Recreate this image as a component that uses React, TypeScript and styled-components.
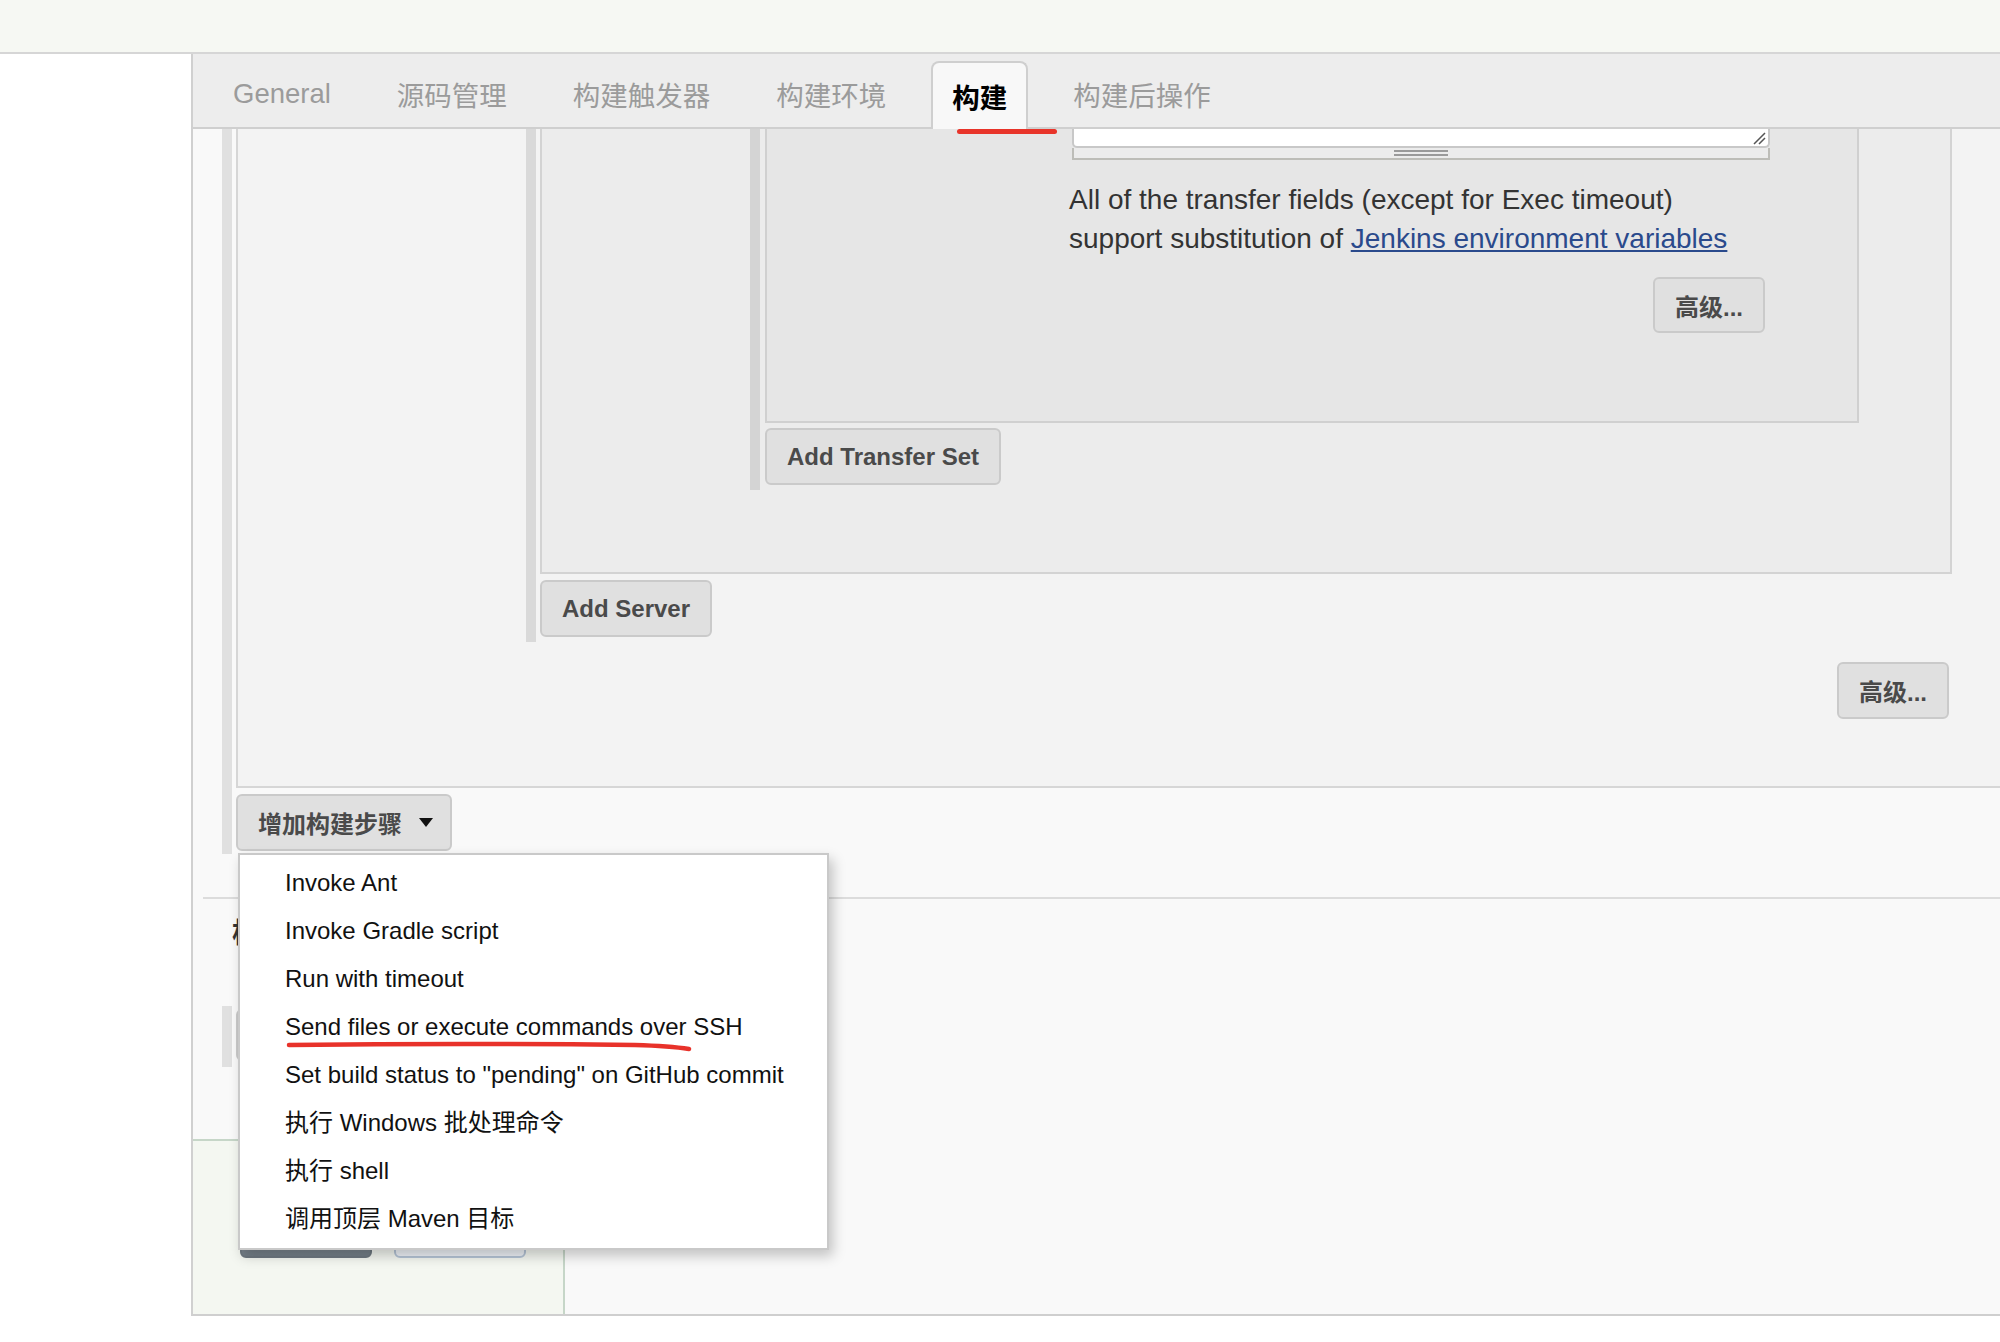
import React from 'react'
import styled, { createGlobalStyle } from 'styled-components'

const FONT = `'Liberation Sans', 'Noto Sans CJK SC', sans-serif`

const GlobalStyle = createGlobalStyle`
  html, body {
    margin: 0;
    padding: 0;
    background: #fff;
  }
  body {
    font-family: ${FONT};
    color: #333;
  }
  * {
    box-sizing: border-box;
  }
`

const Page = styled.div`
  width: 2000px;
  height: 1342px;
  overflow: hidden;
  background: #fff;
`

const TopBar = styled.div`
  height: 54px;
  background: #f6f8f3;
  border-bottom: 2px solid #d6d6d6;
`

const Main = styled.div`
  display: flex;
`

const Gutter = styled.div`
  width: 191px;
  flex-shrink: 0;
`

const Panel = styled.div`
  flex: 1;
  min-width: 0;
  height: 1262px;
  display: flex;
  flex-direction: column;
  background: #f9f9f9;
  border-left: 2px solid #d0d0d0;
  border-bottom: 2px solid #cfcfcf;
  overflow: hidden;
`

const TabBar = styled.div`
  position: relative;
  z-index: 2;
  height: 75px;
  flex-shrink: 0;
  display: flex;
  align-items: flex-end;
  gap: 24px;
  padding-left: 19px;
  background: #ededed;
  border-bottom: 2px solid #cfcfcf;
`

const Tab = styled.div<{ $active?: boolean }>`
  position: relative;
  display: flex;
  align-items: center;
  height: ${p => (p.$active ? 68 : 66)}px;
  margin-bottom: ${p => (p.$active ? -2 : 0)}px;
  padding: 0 ${p => (p.$active ? 19 : 21)}px;
  font-size: 27.5px;
  color: ${p => (p.$active ? '#000' : '#9b9b9b')};
  font-weight: ${p => (p.$active ? 'bold' : 'normal')};
  background: ${p => (p.$active ? '#f8f8f8' : 'transparent')};
  border: ${p => (p.$active ? '2px solid #cfcfcf' : 'none')};
  border-bottom: none;
  border-radius: 8px 8px 0 0;
`

const TabMark = styled.span`
  position: absolute;
  left: 24px;
  top: 100%;
  width: 100px;
  height: 5px;
  border-radius: 3px;
  background: #e8342a;
`

const Body = styled.div`
  flex: 1;
  display: flex;
  flex-direction: column;
  padding-left: 29px;
`

const Section = styled.div<{ $bar: string; $pad?: number; $bottom?: number; $width?: number }>`
  border-left: 10px solid ${p => p.$bar};
  padding: 0 0 ${p => p.$bottom ?? 0}px ${p => p.$pad ?? 4}px;
  ${p => (p.$width ? `width: ${p.$width}px;` : '')}
`

const Box = styled.div<{ $bg: string; $line: string; $left: number; $right?: number; $bottom: number; $open?: boolean }>`
  background: ${p => p.$bg};
  border: 2px solid ${p => p.$line};
  border-top: none;
  ${p => (p.$open ? 'border-right: none;' : '')}
  padding: 0 ${p => p.$right ?? 0}px ${p => p.$bottom}px ${p => p.$left}px;
`

const Button = styled.button<{ $h?: number }>`
  height: ${p => p.$h ?? 57}px;
  padding: 0 20px;
  display: inline-flex;
  align-items: center;
  background: #e0e0e0;
  border: 2px solid #cacaca;
  border-radius: 6px;
  font-family: ${FONT};
  font-weight: bold;
  font-size: 24px;
  color: #4a4a4a;
  white-space: nowrap;
`

const ButtonRow = styled.div<{ $top: number; $right?: number; $end?: boolean; $width?: number }>`
  display: flex;
  justify-content: ${p => (p.$end ? 'flex-end' : 'flex-start')};
  margin-top: ${p => p.$top}px;
  padding-right: ${p => p.$right ?? 0}px;
  ${p => (p.$width ? `width: ${p.$width}px;` : '')}
`

const TextareaStub = styled.div`
  height: 19px;
  margin-left: 3px;
  display: flex;
  justify-content: flex-end;
  align-items: flex-end;
  padding: 0 2px 1px 0;
  background: #fff;
  border: 2px solid #c8c8c8;
  border-top: none;
  border-radius: 0 0 5px 5px;
`

const Grip = styled.div`
  height: 12px;
  margin-left: 3px;
  display: flex;
  justify-content: center;
  align-items: center;
  background: #ececec;
  border: 2px solid #bdbdb8;
  border-top: none;
`

const GripLines = styled.div`
  width: 54px;
  height: 6px;
  border-top: 2px solid #9a9a9a;
  border-bottom: 2px solid #9a9a9a;
`

const Note = styled.p`
  margin: 20px 0 0;
  font-size: 28px;
  line-height: 39px;
  color: #333;
`

const Link = styled.a`
  color: #2a4a8c;
  text-decoration: underline;
`

const DropdownWrap = styled.div`
  position: relative;
  margin-top: 6px;
`

const DropdownButton = styled(Button)`
  padding-right: 17px;
`

const Caret = styled.span`
  width: 0;
  height: 0;
  margin-left: 17px;
  border-left: 7px solid transparent;
  border-right: 7px solid transparent;
  border-top: 9px solid #111;
`

const Menu = styled.ul`
  position: absolute;
  z-index: 10;
  top: 59px;
  left: 2px;
  width: 591px;
  margin: 0;
  padding: 4px 0 5px;
  list-style: none;
  background: #fff;
  border: 2px solid #c9c9c9;
  box-shadow: 4px 6px 12px rgba(0, 0, 0, 0.22);
`

const MenuItem = styled.li`
  position: relative;
  height: 48px;
  line-height: 48px;
  padding-left: 45px;
  font-size: 24px;
  color: #111;
  white-space: nowrap;
`

const Scribble = styled.svg`
  position: absolute;
  left: 45px;
  top: 36px;
`

const Divider = styled.div`
  margin: 43px 0 0 -19px;
  border-top: 2px solid #dcdcdc;
`

const Heading = styled.h3`
  margin: 15px 0 0 10px;
  font-size: 28px;
  line-height: 39px;
  font-weight: bold;
  color: #333;
`

const PostSection = styled(Section)`
  margin-top: 53px;
  padding-top: 3px;
`

const BottomBar = styled.div`
  flex: 1;
  width: 374px;
  margin: 72px 0 0 -31px;
  display: flex;
  gap: 22px;
  padding: 61px 0 0 47px;
  background: #f4f7f1;
  border: 2px solid #c6d6c8;
  border-bottom: none;
`

const FormButton = styled.button<{ $primary?: boolean }>`
  width: 132px;
  height: 56px;
  border-radius: 6px;
  font-family: ${FONT};
  font-size: 24px;
  font-weight: bold;
  color: ${p => (p.$primary ? '#fff' : '#3b5b8a')};
  background: ${p => (p.$primary ? 'linear-gradient(#9aa3ab, #737e87)' : '#eef2f7')};
  border: 2px solid ${p => (p.$primary ? '#6e7880' : '#b5c4d6')};
`

const tabs = ['General', '源码管理', '构建触发器', '构建环境', '构建', '构建后操作']

const menuItems = [
  'Invoke Ant',
  'Invoke Gradle script',
  'Run with timeout',
  'Send files or execute commands over SSH',
  'Set build status to "pending" on GitHub commit',
  '执行 Windows 批处理命令',
  '执行 shell',
  '调用顶层 Maven 目标',
]

const ResizeIcon = () => (
  <svg width="14" height="14" viewBox="0 0 14 14">
    <path d="M13 2 L2 13 M13 7 L7 13" stroke="#555" strokeWidth="1.5" />
  </svg>
)

const App: React.FC = () => {
  return (
    <Page>
      <GlobalStyle />
      <TopBar />
      <Main>
        <Gutter />
        <Panel>
          <TabBar>
            {tabs.map(t => (
              <Tab key={t} $active={t === '构建'}>
                {t}
                {t === '构建' && <TabMark />}
              </Tab>
            ))}
          </TabBar>

          <Body>
            <Section $bar="#e0e0e0" $bottom={3}>
              <Box $bg="#f3f3f3" $line="#d6d6d6" $left={288} $bottom={67} $open>
                <Section $bar="#d9d9d9" $bottom={5} $width={1426}>
                  <Box $bg="#ececec" $line="#d3d3d3" $left={208} $bottom={82}>
                    <Section $bar="#d4d4d4" $pad={5} $bottom={5} $width={1109}>
                      <Box $bg="#e6e6e6" $line="#d0d0d0" $left={302} $right={87} $bottom={88}>
                        <TextareaStub>
                          <ResizeIcon />
                        </TextareaStub>
                        <Grip>
                          <GripLines />
                        </Grip>
                        <Note>
                          All of the transfer fields (except for Exec timeout)
                          <br />
                          support substitution of <Link href="#">Jenkins environment variables</Link>
                        </Note>
                        <ButtonRow $top={19} $right={5} $end>
                          <Button $h={56}>高级...</Button>
                        </ButtonRow>
                      </Box>
                      <ButtonRow $top={5}>
                        <Button>Add Transfer Set</Button>
                      </ButtonRow>
                    </Section>
                  </Box>
                  <ButtonRow $top={6}>
                    <Button>Add Server</Button>
                  </ButtonRow>
                </Section>
                <ButtonRow $top={20} $right={3} $end $width={1426}>
                  <Button>高级...</Button>
                </ButtonRow>
              </Box>

              <DropdownWrap>
                <DropdownButton>
                  增加构建步骤
                  <Caret />
                </DropdownButton>
                <Menu>
                  {menuItems.map((item, i) => (
                    <MenuItem key={item}>
                      {item}
                      {i === 3 && (
                        <Scribble width="420" height="14" viewBox="0 0 420 14">
                          <path
                            d="M4 6 Q180 4 350 6 Q385 7 404 10"
                            fill="none"
                            stroke="#e8322a"
                            strokeWidth="4.5"
                            strokeLinecap="round"
                          />
                        </Scribble>
                      )}
                    </MenuItem>
                  ))}
                </Menu>
              </DropdownWrap>
            </Section>

            <Divider />
            <Heading>构建后操作</Heading>
            <PostSection $bar="#e0e0e0" $pad={4} $bottom={6}>
              <Button $h={52}>增加构建后操作步骤</Button>
            </PostSection>

            <BottomBar>
              <FormButton $primary>保存</FormButton>
              <FormButton>应用</FormButton>
            </BottomBar>
          </Body>
        </Panel>
      </Main>
    </Page>
  )
}

export default App
